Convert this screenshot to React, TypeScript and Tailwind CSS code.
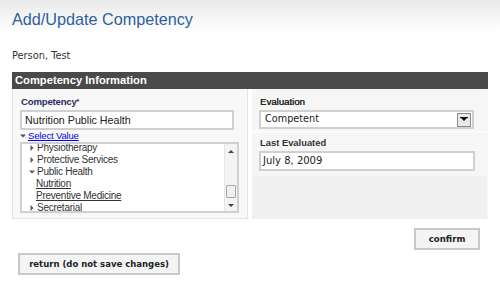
import React from "react";

const verdana = { fontFamily: '"DejaVu Sans", Verdana, sans-serif' };

function Tri({ open }: { open?: boolean }) {
  return open ? (
    <svg width="6" height="6" viewBox="0 0 6 6" className="mr-[2px]">
      <path d="M0 1.5 L6 1.5 L3 4.5 Z" fill="#555" />
    </svg>
  ) : (
    <svg width="6" height="6" viewBox="0 0 6 6" className="mr-[2px]">
      <path d="M1.5 0 L4.5 3 L1.5 6 Z" fill="#555" />
    </svg>
  );
}

function ScrollBar() {
  return (
    <div className="w-[13px] flex flex-col bg-[#f3f3f3] border-l border-[#e6e6e6]">
      <div className="h-[13px] flex items-center justify-center">
        <svg width="6" height="4" viewBox="0 0 6 4">
          <path d="M0 4 L3 1 L6 4 Z" fill="#444" />
        </svg>
      </div>
      <div className="flex-1 flex flex-col justify-end pb-[2px]">
        <div className="h-[13px] mx-[1px] bg-[#f0f0f0] border border-[#a8a8a8] rounded-[1px]" />
      </div>
      <div className="h-[11px] flex items-center justify-center">
        <svg width="6" height="4" viewBox="0 0 6 4">
          <path d="M0 0 L6 0 L3 3 Z" fill="#444" />
        </svg>
      </div>
    </div>
  );
}

export default function App() {
  return (
    <div
      className="w-[500px] h-[295px] bg-[linear-gradient(#e9e9e9,#ffffff_32px)] overflow-hidden"
      style={{ fontFamily: '"Liberation Sans", Arial, sans-serif' }}
    >
      <div className="px-3 pt-[9px]">
        <h1 className="text-[16.2px] leading-[20px] text-[#2d5f9e]">Add/Update Competency</h1>
        <p className="mt-[20px] text-[9.8px] leading-[14px] text-[#333]" style={verdana}>
          Person, Test
        </p>

        <div className="mt-[9px] w-[476px]">
          <div className="h-[17px] bg-[#4a4a4a] pl-[3px] text-white text-[11.2px] font-bold leading-[17px]">
            Competency Information
          </div>

          <div className="flex gap-[4px] h-[130px]">
            <div className="w-[236px] bg-[#f8f8f8] border border-[#e3e3e3] border-t-0 pl-[7px] pt-[7px]">
              <div className="text-[9.6px] tracking-[-0.2px] font-bold text-[#2d2d5c] leading-[12px] pl-[1px]">
                Competency<span className="text-[7px] align-top">*</span>
              </div>
              <div className="mt-[2px] w-[214px] h-[20px] bg-white border-2 border-[#d0d0d0] pl-[3px] text-[10.7px] leading-[16px] text-[#222]">
                Nutrition Public Health
              </div>
              <div className="flex items-center h-[12px] text-[9.6px] tracking-[-0.2px] leading-[12px]">
                <Tri open />
                <a className="text-[#0000ee] underline">Select Value</a>
              </div>
              <div className="w-[219px] h-[71px] bg-white border-2 border-[#d0d0d0] flex overflow-hidden">
                <div className="flex-1 pl-[7px] -mt-[2px] text-[10px] tracking-[-0.25px] leading-[12px] text-[#333]">
                  <div className="flex items-center"><Tri />Physiotherapy</div>
                  <div className="flex items-center"><Tri />Protective Services</div>
                  <div className="flex items-center"><Tri open />Public Health</div>
                  <div className="pl-[7px] underline">Nutrition</div>
                  <div className="pl-[7px] underline">Preventive Medicine</div>
                  <div className="flex items-center"><Tri />Secretarial</div>
                </div>
                <ScrollBar />
              </div>
            </div>

            <div className="flex-1 flex flex-col bg-[#f0f0f0] border-r border-[#f8f8f8]">
              <div className="h-[44px] bg-[#f6f6f6] border-b-2 border-[#fbfbfb] pl-[8px] pt-[7px]">
                <div className="text-[9.6px] text-[#222] leading-[12px] [text-shadow:0.3px_0_0_#222]">Evaluation</div>
                <div
                  className="mt-[2px] -ml-[1px] w-[215px] h-[19px] bg-white border-2 border-[#d0d0d0] flex items-center justify-between pl-[4px] pr-[1px]"
                  style={verdana}
                >
                  <span className="text-[9.7px] text-[#222]">Competent</span>
                  <span className="w-[14px] h-[14px] border border-[#8c8c8c] bg-[#e8e8e8] flex items-center justify-center">
                    <svg width="8" height="5" viewBox="0 0 8 5">
                      <path d="M0 0 H8 V1 H7 L4 4 L1 1 H0 Z" fill="#111" />
                    </svg>
                  </span>
                </div>
              </div>
              <div className="h-[43px] bg-[#f6f6f6] pl-[8px] pt-[4px]">
                <div className="text-[9.4px] font-bold text-[#333] leading-[12px]">Last Evaluated</div>
                <div
                  className="mt-[2px] -ml-[1px] w-[216px] h-[20px] bg-white border-2 border-[#d0d0d0] pl-[2px] text-[10px] leading-[16px] text-[#222]"
                  style={verdana}
                >
                  July 8, 2009
                </div>
              </div>
              <div className="flex-1" />
            </div>
          </div>
        </div>

        <div className="flex justify-end w-[468px] mt-[9px]" style={verdana}>
          <button className="block w-[66px] h-[22px] bg-[#f4f4f4] border-2 border-[#c8c8c8] text-[8.6px] font-bold text-[#222]">
            confirm
          </button>
        </div>
        <div className="flex mt-[3px] pl-[6px]" style={verdana}>
          <button className="block w-[162px] h-[22px] bg-[#f4f4f4] border-2 border-[#c8c8c8] text-[8.5px] font-bold text-[#222]">
            return (do not save changes)
          </button>
        </div>
      </div>
    </div>
  );
}
